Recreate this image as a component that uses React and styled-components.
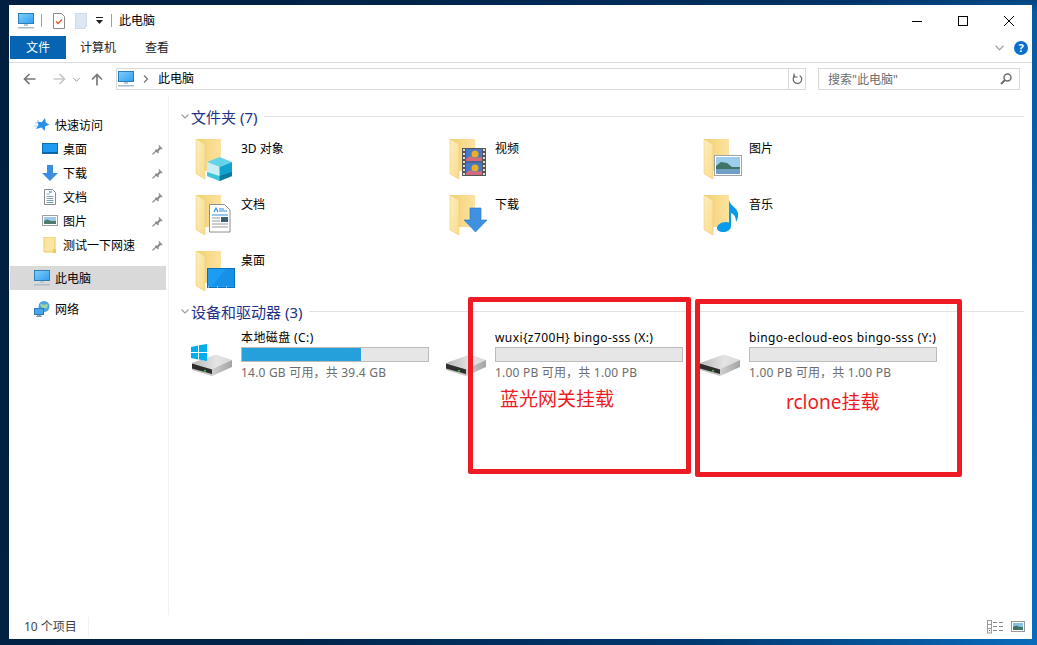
import React from 'react';
import styled, { createGlobalStyle } from 'styled-components';

const GlobalStyle = createGlobalStyle`
  html, body { margin: 0; padding: 0; }
  body {
    font-family: "Noto Sans", "Noto Sans CJK SC", sans-serif;
    font-size: 12px;
    color: #000;
    overflow: hidden;
  }
`;

const Desktop = styled.div`
  position: relative;
  width: 1037px;
  height: 645px;
  box-sizing: border-box;
  padding: 5px 5px 6px 9px;
  background:
    linear-gradient(180deg, rgba(0, 30, 70, 0.35), rgba(0, 30, 70, 0) 12px),
    linear-gradient(100deg, #012040 0%, #01264c 35%, #01386f 70%, #0a6cbc 100%);
`;

const Win = styled.div`
  display: flex;
  flex-direction: column;
  width: 1023px;
  height: 634px;
  background: #fff;
`;

const TitleBar = styled.div`
  display: flex;
  align-items: center;
  height: 31px;
  padding-left: 9px;
`;

const QuickBtn = styled.span`
  display: flex;
  margin-right: ${p => p.$gap}px;
`;

const Sep = styled.span`
  width: 1px;
  height: 13px;
  margin-right: ${p => p.$gap}px;
  background: #a0a0a0;
`;

const TitleText = styled.span`
  flex: 1;
  line-height: 31px;
`;

const WinBtn = styled.span`
  display: flex;
  align-items: center;
  justify-content: center;
  width: 46px;
  height: 31px;
`;

const Ribbon = styled.div`
  display: flex;
  align-items: flex-start;
  height: 26px;
  padding-left: 1px;
  border-bottom: 1px solid #dadbdc;
`;

const Tab = styled.div`
  height: 23px;
  line-height: 24px;
  padding: ${p => (p.$active ? '0 16px' : '0')};
  margin-right: ${p => p.$gap}px;
  background: ${p => (p.$active ? '#0664b2' : 'transparent')};
  color: ${p => (p.$active ? '#fff' : '#222')};
  text-align: center;
`;

const RibbonRight = styled.div`
  display: flex;
  align-items: center;
  gap: 10px;
  height: 23px;
  margin-left: auto;
  padding-right: 4px;
`;

const HelpDot = styled.span`
  width: 14px;
  height: 14px;
  border-radius: 50%;
  background: #0b6fce;
  color: #fff;
  font-weight: 700;
  font-size: 11px;
  line-height: 14px;
  text-align: center;
`;

const AddressRow = styled.div`
  display: flex;
  align-items: flex-start;
  height: 28px;
  padding-top: 5px;
`;

const NavButtons = styled.div`
  display: flex;
  align-items: center;
  width: 107px;
  height: 22px;
`;

const NavBtn = styled.span`
  display: flex;
  justify-content: center;
  width: ${p => p.$w}px;
  margin-left: ${p => p.$ml || 0}px;
`;

const AddressBox = styled.div`
  display: flex;
  align-items: center;
  box-sizing: border-box;
  width: 690px;
  height: 22px;
  border: 1px solid #d9d9d9;
  padding-left: 1px;
`;

const CrumbSep = styled.span`
  display: flex;
  margin-left: 9px;
`;

const Crumb = styled.span`
  margin-left: 9px;
  flex: 1;
  line-height: 20px;
`;

const Refresh = styled.span`
  display: flex;
  align-items: center;
  justify-content: center;
  width: 16px;
  height: 20px;
  border-left: 1px solid #d9d9d9;
`;

const SearchBox = styled.div`
  display: flex;
  align-items: center;
  justify-content: space-between;
  box-sizing: border-box;
  width: 202px;
  height: 22px;
  margin-left: 12px;
  padding: 0 7px 0 9px;
  border: 1px solid #d9d9d9;
  color: #6d6d6d;
`;

const Body = styled.div`
  flex: 1;
  display: flex;
  min-height: 0;
`;

const Sidebar = styled.nav`
  box-sizing: border-box;
  width: 160px;
  padding: 17px 2px 0 1px;
  border-right: 1px solid #f0f0f0;
`;

const NavRow = styled.div`
  display: flex;
  align-items: center;
  height: 24px;
  margin-top: ${p => p.$mt || 0}px;
  padding: 0 3px 0 ${p => (p.$indent ? 32 : 24)}px;
  background: ${p => (p.$selected ? '#d9d9d9' : 'transparent')};
`;

const NavIcon = styled.span`
  display: flex;
  flex: none;
  width: 16px;
  height: 16px;
  margin-right: 5px;
`;

const PinSlot = styled.span`
  display: flex;
  margin-left: auto;
`;

const Content = styled.main`
  flex: 1;
  padding: 11px 8px 0 12px;
`;

const SectionHead = styled.div`
  display: flex;
  align-items: center;
  height: 18px;
  color: #1e3287;
  font-size: 15px;
`;

const HeadLine = styled.span`
  flex: 1;
  height: 1px;
  margin-left: 7px;
  background: #e2e2e2;
`;

const HeadChevron = styled.span`
  display: flex;
  width: 10px;
`;

const FolderGrid = styled.div`
  display: grid;
  grid-template-columns: repeat(3, 254px);
  grid-auto-rows: 56px;
  margin-top: 9px;
  padding-left: 9px;
`;

const Tile = styled.div`
  display: flex;
  height: 56px;
`;

const TileIcon = styled.span`
  display: flex;
  flex: none;
  width: 48px;
  height: 48px;
  margin-right: 3px;
`;

const TileName = styled.span`
  line-height: 16px;
  margin-top: 7px;
`;

const DriveGrid = styled.div`
  display: grid;
  grid-template-columns: repeat(3, 254px);
  margin-top: 10px;
  padding-left: 9px;
`;

const Drive = styled.div`
  display: flex;
`;

const DriveIcon = styled.span`
  position: relative;
  flex: none;
  display: block;
  width: 44px;
  height: 48px;
  margin-right: 7px;
`;

const DriveInfo = styled.div`
  width: 188px;
`;

const DriveName = styled.div`
  height: 17px;
  line-height: 16px;
  letter-spacing: 0.4px;
  white-space: nowrap;
`;

const Meter = styled.div`
  box-sizing: border-box;
  height: 15px;
  background: #e6e6e6;
  border: 1px solid #bcbcbc;
`;

const MeterFill = styled.div`
  height: 100%;
  background: #26a0da;
`;

const DriveFree = styled.div`
  margin-top: 2px;
  line-height: 18px;
  letter-spacing: 0.2px;
  color: #6d6d6d;
  white-space: nowrap;
`;

const StatusBar = styled.footer`
  display: flex;
  align-items: center;
  height: 24px;
  padding: 0 7px 0 15px;
  color: #444;
`;

const StatusCount = styled.span`
  padding-right: 11px;
  border-right: 1px solid #f0f0f0;
  line-height: 20px;
`;

const ViewIcons = styled.span`
  display: flex;
  align-items: center;
  gap: 7px;
  margin-left: auto;
`;

/* red marks someone drew on top of the screenshot */
const RedFrame = styled.div`
  position: absolute;
  left: ${p => p.$x}px;
  top: ${p => p.$y}px;
  width: ${p => p.$w}px;
  height: ${p => p.$h}px;
  box-sizing: border-box;
  border: 5px solid #ed1c24;
  border-radius: 2px;
`;

const RedNote = styled.span`
  position: absolute;
  left: ${p => p.$x}px;
  top: ${p => p.$y}px;
  color: #ed1c24;
  font-size: 19px;
  line-height: 26px;
  white-space: nowrap;
`;

const Monitor = () => (
  <svg width="16" height="16" viewBox="0 0 16 16">
    <defs>
      <linearGradient id="scr" x1="0" y1="0" x2="1" y2="1">
        <stop offset="0" stopColor="#7fd0fb" />
        <stop offset="1" stopColor="#2f9df0" />
      </linearGradient>
    </defs>
    <rect x="0.5" y="0.5" width="15" height="10" fill="url(#scr)" stroke="#2d7fb8" />
    <rect x="6" y="11" width="4" height="2" fill="#b9c8d4" />
    <rect x="0" y="14" width="16" height="1.5" fill="#a9bccb" />
  </svg>
);

const NotepadIcon = () => (
  <svg width="12" height="16" viewBox="0 0 12 16">
    <path d="M.5.5h8l3 3v12H.5z" fill="#fff" stroke="#8a8a8a" />
    <path d="M3 8.5l2 2 4-4" fill="none" stroke="#e8572a" strokeWidth="1.4" />
  </svg>
);

const BlankDocIcon = () => (
  <svg width="12" height="16" viewBox="0 0 12 16">
    <path d="M0 0h12v12l-3 4H0z" fill="#dde6f3" stroke="#c4d1e4" />
  </svg>
);

const CaretBar = () => (
  <svg width="7" height="7" viewBox="0 0 7 7">
    <rect x="0" y="0" width="7" height="1" fill="#222" />
    <path d="M0 3h7L3.5 7z" fill="#222" />
  </svg>
);

const MinIcon = () => (
  <svg width="10" height="10" viewBox="0 0 10 10"><rect x="0" y="5" width="10" height="1" fill="#000" /></svg>
);
const MaxIcon = () => (
  <svg width="10" height="10" viewBox="0 0 10 10"><rect x=".5" y=".5" width="9" height="9" fill="none" stroke="#000" /></svg>
);
const CloseIcon = () => (
  <svg width="10" height="10" viewBox="0 0 10 10"><path d="M0 0l10 10M10 0L0 10" stroke="#000" strokeWidth="1" /></svg>
);

const Chevron = ({ color = '#9a9a9a', w = 8 }) => (
  <svg width={w} height={w} viewBox="0 0 8 8">
    <path d="M.5 2.5L4 6l3.5-3.5" fill="none" stroke={color} strokeWidth="1.1" />
  </svg>
);

const ArrowLeft = ({ color }) => (
  <svg width="13" height="12" viewBox="0 0 13 12">
    <path d="M12.5 6H2M6.5 1L1.5 6l5 5" fill="none" stroke={color} strokeWidth="1.7" />
  </svg>
);
const ArrowRight = ({ color }) => (
  <svg width="13" height="12" viewBox="0 0 13 12">
    <path d="M.5 6H11M6.5 1l5 5-5 5" fill="none" stroke={color} strokeWidth="1.7" />
  </svg>
);
const ArrowUp = () => (
  <svg width="12" height="13" viewBox="0 0 12 13">
    <path d="M6 12.5V2M1 6.5l5-5 5 5" fill="none" stroke="#7a7a7a" strokeWidth="1.7" />
  </svg>
);
const CrumbArrow = () => (
  <svg width="6" height="8" viewBox="0 0 6 8">
    <path d="M1 .5L4.500 4 1 7.500" fill="none" stroke="#777" strokeWidth="1.200" />
  </svg>
);
const RefreshIcon = () => (
  <svg width="11" height="12" viewBox="0 0 11 12">
    <path d="M7.600 2.400A4.300 4.300 0 1 1 3 2.600" fill="none" stroke="#666" strokeWidth="1.200" />
    <path d="M2 .4v3.600h3.600" fill="none" stroke="#666" strokeWidth="1.200" />
  </svg>
);
const SearchIcon = () => (
  <svg width="12" height="12" viewBox="0 0 12 12">
    <circle cx="7.500" cy="4.500" r="3.500" fill="none" stroke="#6d6d6d" strokeWidth="1.500" />
    <path d="M5 7l-4 4" stroke="#6d6d6d" strokeWidth="2" />
  </svg>
);

const StarIcon = () => (
  <svg width="16" height="16" viewBox="0 0 16 16">
    <path d="M11 1l.8 4.600L15.500 8l-4.200 1L10.500 14 7.500 10.500 2 12l2.500-4.500L3 4.500l4.800.8z" fill="#2a8fe6" />
    <path d="M1 6h3M0 9h3M3 3l2 1" stroke="#8ac6f4" strokeWidth=".8" />
  </svg>
);
const DesktopSmall = () => (
  <svg width="16" height="16" viewBox="0 0 16 16">
    <rect x=".5" y="2.500" width="15" height="10" fill="#1e9bf0" stroke="#0c6cb4" />
    <rect x="1" y="11" width="14" height="1" fill="#0a5f9f" />
  </svg>
);
const DownSmall = () => (
  <svg width="16" height="16" viewBox="0 0 16 16">
    <path d="M5 0h6v8h5l-8 8-8-8h5z" fill="#3b8fe0" />
  </svg>
);
const DocSmall = () => (
  <svg width="16" height="16" viewBox="0 0 16 16">
    <path d="M2.500.5h8l3 3v12h-11z" fill="#fff" stroke="#8a8a8a" />
    <path d="M4.500 5h3M4.500 7.500h7M4.500 9.500h7M4.500 11.500h7M4.500 13.500h7" stroke="#7f9fbf" />
    <path d="M7 3h3" stroke="#2b8ad6" strokeWidth="1.200" />
  </svg>
);
const PicSmall = () => (
  <svg width="16" height="16" viewBox="0 0 16 16">
    <rect x=".5" y="2.500" width="15" height="10" fill="#fff" stroke="#a0a0a0" />
    <rect x="2" y="4" width="12" height="4" fill="#9cc9e8" />
    <path d="M2 8l3-1.500 4 1.500h5v3H2z" fill="#4d7a6c" />
  </svg>
);
const NoteFolder = () => (
  <svg width="16" height="16" viewBox="0 0 16 16">
    <path d="M2 0h11v15H2z" fill="#fbe5a3" stroke="#eec95c" />
    <rect x="11" y="12" width="3" height="4" fill="#eec95c" />
  </svg>
);
const NetworkIcon = () => (
  <svg width="16" height="16" viewBox="0 0 16 16">
    <circle cx="10" cy="5.500" r="5.500" fill="#4da3dc" />
    <path d="M6 3c2-1 3 1 4 1s2-2 4 0l-1 3c-2 1-3-1-5 0z" fill="#9ed6a2" />
    <rect x=".5" y="7.500" width="9" height="6" fill="#49a4ea" stroke="#2a7cb6" />
    <rect x="3" y="14" width="4" height="1" fill="#8aa0b0" />
    <rect x="2" y="15" width="6" height="1" fill="#8aa0b0" />
  </svg>
);
const PinIcon = () => (
  <svg width="11" height="11" viewBox="0 0 11 11">
    <path d="M6.500.5l4 4-1 .8-.8-.2-2 2 .1 1.700-.9.700L2.800 6.400l.7-.9 1.700.1 2-2-.2-.8z" fill="#8c8c8c" />
    <path d="M4 7l-3.500 3.500" stroke="#8c8c8c" strokeWidth="1.100" />
  </svg>
);

/* big folder shared by the library tiles, overlay goes in as children */
const FolderIcon = ({ children, id }) => (
  <svg width="48" height="48" viewBox="0 0 48 48">
    <defs>
      <linearGradient id={id + 'b'} x1="0" y1="0" x2="1" y2="0">
        <stop offset="0" stopColor="#f3cf72" />
        <stop offset="1" stopColor="#fbe3a0" />
      </linearGradient>
      <linearGradient id={id + 'f'} x1="0" y1="0" x2="1" y2="1">
        <stop offset="0" stopColor="#fdeebf" />
        <stop offset="1" stopColor="#f9dc8c" />
      </linearGradient>
    </defs>
    <path d="M6 5h25v32H15z" fill={`url(#${id}b)`} />
    <path d="M6 5l9 5v35l-9-5z" fill={`url(#${id}f)`} stroke="#e9c56b" strokeWidth=".5" />
    {children}
  </svg>
);

const Cube = () => (
  <g>
    <path d="M29.500 23L42 28l-12.500 5L17 28z" fill="#63d3ea" />
    <path d="M17 28l12.500 5v14L17 42z" fill="#c9eef5" />
    <path d="M42 28l-12.500 5v14L42 42z" fill="#11a2ce" />
    <path d="M17 38l12.500 4v5L17 42z" fill="#3cc6d8" />
    <path d="M42 38l-12.500 4v5L42 42z" fill="#0b7a9e" />
  </g>
);
const DocOverlay = () => (
  <g>
    <path d="M19.500 14.500h15l5.500 5.500v22H19.500z" fill="#fff" stroke="#8e8e8e" />
    <path d="M24 22l2-4 2 4" fill="none" stroke="#2e8fdc" strokeWidth="1.200" />
    <path d="M29 19h5M29 21h8M22 25h16" stroke="#2e8fdc" />
    <path d="M22 28h8M22 31h8M22 34h16M22 37h16" stroke="#9a9a9a" />
    <rect x="31" y="27" width="7" height="5" fill="#3d5f70" />
  </g>
);
const DesktopOverlay = () => (
  <g>
    <rect x="17.500" y="22.500" width="27" height="19" fill="#1c9cf2" stroke="#0c70b8" />
    <path d="M22 40l14-17h8v17z" fill="#1489e0" opacity=".6" />
    <path d="M18 41h26" stroke="#dff1ff" strokeDasharray="1 8" />
  </g>
);
const FilmOverlay = () => (
  <g>
    <rect x="18" y="14" width="24" height="28" fill="#555" />
    <rect x="22" y="15" width="16" height="12.500" fill="#4878c8" />
    <rect x="22" y="28.500" width="16" height="12.500" fill="#4878c8" />
    <path d="M22 25l4-3 4 2 8-1v4H22zM22 39l4-3 4 2 8-1v4H22z" fill="#d56a7a" />
    <circle cx="31" cy="20" r="3.500" fill="#e8b020" />
    <circle cx="31" cy="34" r="3.500" fill="#e8b020" />
    <path d="M20 15v27M40 15v27" stroke="#ddd" strokeWidth="2" strokeDasharray="2 2" />
  </g>
);
const PicOverlay = () => (
  <g>
    <rect x="16.500" y="21.500" width="27" height="20" fill="#fff" stroke="#a3a3a3" />
    <rect x="18" y="23" width="24" height="17" fill="#9ccdeb" />
    <path d="M18 32l5-4 6 1 5 4h8v3H18z" fill="#3f7467" />
    <rect x="18" y="35" width="24" height="5" fill="#6f9fc4" />
  </g>
);
const DownOverlay = () => (
  <path d="M26 18h11v12h6L31.500 42 20 30h6z" fill="#3f92e2" stroke="#2a74c0" strokeWidth=".6" />
);
const NoteOverlay = () => (
  <path d="M31 10c1 4 3 5 6 8 4 4 4 9 1 14 0-5-2-8-5-9v13c0 4-4 6-8 6-4 0-6-2-6-4 0-3 4-6 9-6 1 0 2 .2 3 .5z" fill="#0a9be8" />
);

const DiskGlyph = () => (
  <svg width="44" height="24" viewBox="0 0 44 24">
    <defs>
      <linearGradient id="disktop" x1="0" y1="0" x2="1" y2="0">
        <stop offset="0" stopColor="#b8b8b8" />
        <stop offset=".6" stopColor="#e4e4e4" />
        <stop offset="1" stopColor="#d8d8d8" />
      </linearGradient>
      <linearGradient id="diskside" x1="0" y1="0" x2="1" y2="0">
        <stop offset="0" stopColor="#cfcfcf" />
        <stop offset="1" stopColor="#a4a4a4" />
      </linearGradient>
    </defs>
    <path d="M2 9L26 .5 42 6 22 15z" fill="url(#disktop)" />
    <path d="M2 9l20 6v7L2 16z" fill="#c4c4c4" />
    <path d="M2 9.500l20 6v4.500L2 14.500z" fill="#2e2e2e" />
    <path d="M22 15l20-9v7l-20 9z" fill="url(#diskside)" />
    <rect x="14" y="16" width="2" height="1.500" fill="#30d030" />
  </svg>
);

const WinLogo = styled.svg`
  position: absolute;
  left: 1px;
  top: 14px;
`;

const DiskSlot = styled.span`
  position: absolute;
  left: 0;
  top: 24px;
  display: flex;
`;

const ViewDetails = () => (
  <svg width="17" height="14" viewBox="0 0 17 14">
    <rect x=".5" y=".5" width="4" height="4" fill="#fff" stroke="#999" />
    <rect x=".5" y="4.500" width="4" height="4" fill="#fff" stroke="#999" />
    <rect x=".5" y="8.500" width="4" height="4.500" fill="#fff" stroke="#999" />
    <path d="M6 2.500h4M12 2.500h4M6 6.500h4M12 6.500h4M6 10.500h4M12 10.500h4" stroke="#888" />
    <rect x="2" y="10" width="1" height="1" fill="#d04040" />
  </svg>
);
const ViewTiles = () => (
  <svg width="14" height="12" viewBox="0 0 14 12">
    <rect x=".5" y=".5" width="13" height="10" fill="#fff" stroke="#999" />
    <rect x="2" y="2" width="10" height="4" fill="#86c0e4" />
    <path d="M2 6l3-1.500 4 1.500h3v3H2z" fill="#3f7467" />
  </svg>
);

const folders = [
  { name: '3D 对象', id: 'f1', art: <Cube /> },
  { name: '视频', id: 'f2', art: <FilmOverlay /> },
  { name: '图片', id: 'f3', art: <PicOverlay /> },
  { name: '文档', id: 'f4', art: <DocOverlay /> },
  { name: '下载', id: 'f5', art: <DownOverlay /> },
  { name: '音乐', id: 'f6', art: <NoteOverlay /> },
  { name: '桌面', id: 'f7', art: <DesktopOverlay /> },
];

const drives = [
  { name: '本地磁盘 (C:)', free: '14.0 GB 可用，共 39.4 GB', used: 64, system: true },
  { name: 'wuxi{z700H} bingo-sss (X:)', free: '1.00 PB 可用，共 1.00 PB', used: 0 },
  { name: 'bingo-ecloud-eos bingo-sss (Y:)', free: '1.00 PB 可用，共 1.00 PB', used: 0 },
];

const pinned = [
  { name: '桌面', icon: <DesktopSmall /> },
  { name: '下载', icon: <DownSmall /> },
  { name: '文档', icon: <DocSmall /> },
  { name: '图片', icon: <PicSmall /> },
  { name: '测试一下网速', icon: <NoteFolder /> },
];

export default function App() {
  return (
    <>
      <GlobalStyle />
      <Desktop>
        <Win>
          <TitleBar>
            <QuickBtn $gap={7}><Monitor /></QuickBtn>
            <Sep $gap={11} />
            <QuickBtn $gap={10}><NotepadIcon /></QuickBtn>
            <QuickBtn $gap={9}><BlankDocIcon /></QuickBtn>
            <QuickBtn $gap={8}><CaretBar /></QuickBtn>
            <Sep $gap={7} />
            <TitleText>此电脑</TitleText>
            <WinBtn><MinIcon /></WinBtn>
            <WinBtn><MaxIcon /></WinBtn>
            <WinBtn><CloseIcon /></WinBtn>
          </TitleBar>

          <Ribbon>
            <Tab $active $gap={14}>文件</Tab>
            <Tab $gap={29}>计算机</Tab>
            <Tab $gap={0}>查看</Tab>
            <RibbonRight>
              <Chevron color="#a8a8a8" w={9} />
              <HelpDot>?</HelpDot>
            </RibbonRight>
          </Ribbon>

          <AddressRow>
            <NavButtons>
              <NavBtn $w={13} $ml={14}><ArrowLeft color="#777" /></NavBtn>
              <NavBtn $w={13} $ml={17}><ArrowRight color="#c9c9c9" /></NavBtn>
              <NavBtn $w={8} $ml={6}><Chevron color="#999" w={7} /></NavBtn>
              <NavBtn $w={12} $ml={11}><ArrowUp /></NavBtn>
            </NavButtons>
            <AddressBox>
              <Monitor />
              <CrumbSep><CrumbArrow /></CrumbSep>
              <Crumb>此电脑</Crumb>
              <Refresh><RefreshIcon /></Refresh>
            </AddressBox>
            <SearchBox>
              <span>搜索"此电脑"</span>
              <SearchIcon />
            </SearchBox>
          </AddressRow>

          <Body>
            <Sidebar>
              <NavRow>
                <NavIcon><StarIcon /></NavIcon>快速访问
              </NavRow>
              {pinned.map(item => (
                <NavRow $indent key={item.name}>
                  <NavIcon>{item.icon}</NavIcon>
                  {item.name}
                  <PinSlot><PinIcon /></PinSlot>
                </NavRow>
              ))}
              <NavRow $selected $mt={9}>
                <NavIcon><Monitor /></NavIcon>此电脑
              </NavRow>
              <NavRow $mt={7}>
                <NavIcon><NetworkIcon /></NavIcon>网络
              </NavRow>
            </Sidebar>

            <Content>
              <SectionHead>
                <HeadChevron><Chevron /></HeadChevron>
                文件夹 (7)
                <HeadLine />
              </SectionHead>
              <FolderGrid>
                {folders.map(f => (
                  <Tile key={f.id}>
                    <TileIcon><FolderIcon id={f.id}>{f.art}</FolderIcon></TileIcon>
                    <TileName>{f.name}</TileName>
                  </Tile>
                ))}
              </FolderGrid>

              <SectionHead>
                <HeadChevron><Chevron /></HeadChevron>
                设备和驱动器 (3)
                <HeadLine />
              </SectionHead>
              <DriveGrid>
                {drives.map(d => (
                  <Drive key={d.name}>
                    <DriveIcon>
                      <DiskSlot><DiskGlyph /></DiskSlot>
                      {d.system && (
                        <WinLogo width="16" height="17" viewBox="0 0 16 17">
                          <path d="M0 3l7-1.500V8H0zM8 1.300L16 0v8H8zM0 9h7v6.500L0 14zM8 9h8v8l-8-1.400z" fill="#00adef" />
                        </WinLogo>
                      )}
                    </DriveIcon>
                    <DriveInfo>
                      <DriveName>{d.name}</DriveName>
                      <Meter><MeterFill style={{ width: `${d.used}%` }} /></Meter>
                      <DriveFree>{d.free}</DriveFree>
                    </DriveInfo>
                  </Drive>
                ))}
              </DriveGrid>
            </Content>
          </Body>

          <StatusBar>
            <StatusCount>10 个项目</StatusCount>
            <ViewIcons>
              <ViewDetails />
              <ViewTiles />
            </ViewIcons>
          </StatusBar>
        </Win>

        <RedFrame $x={468} $y={297} $w={223} $h={177} />
        <RedFrame $x={695} $y={299} $w={267} $h={178} />
        <RedNote $x={500} $y={386}>蓝光网关挂载</RedNote>
        <RedNote $x={786} $y={389}>rclone挂载</RedNote>
      </Desktop>
    </>
  );
}
